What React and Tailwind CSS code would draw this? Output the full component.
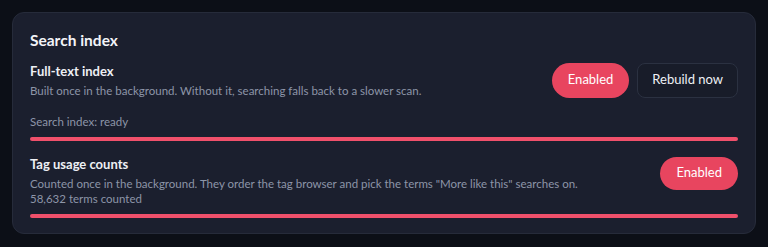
export default function App() {
  return (
    <div className="min-h-[247px] w-full bg-[#0c0f17] p-3" style={{ fontFamily: 'Lato, "Noto Sans", sans-serif' }}>
      <div className="rounded-xl border border-[#262b3a] bg-[#1b1f2e] px-[17px] pt-[17px] pb-[15px]">
        <h2 className="text-[15.5px] font-bold leading-5 text-[#f3f4f8]">Search index</h2>

        <div className="mt-3 flex items-center justify-between gap-4">
          <div>
            <div className="text-[13px] font-bold leading-[18px] text-[#eef0f5]">Full-text index</div>
            <div className="mt-[3px] text-[11.5px] leading-[15px] text-[#8d95a8]">Built once in the background. Without it, searching falls back to a slower scan.</div>
          </div>
          <div className="flex shrink-0 items-center gap-2">
            <button className="h-[35px] rounded-full bg-[#e8455f] px-4 text-[13px] text-white">Enabled</button>
            <button className="h-[35px] rounded-lg border border-[#2b3141] bg-[#181c29] px-[14px] text-[13px] text-[#eef0f5]">Rebuild now</button>
          </div>
        </div>

        <div className="mt-4 text-[11.5px] leading-[15px] text-[#8d95a8]">Search index: ready</div>
        <div className="mt-2 h-1 w-full rounded-full bg-[#f0506b]"></div>

        <div className="mt-[14px] flex items-center justify-between gap-4">
          <div>
            <div className="text-[13px] font-bold leading-[18px] text-[#eef0f5]">Tag usage counts</div>
            <div className="mt-[3px] text-[11.5px] leading-[15px] text-[#8d95a8]">Counted once in the background. They order the tag browser and pick the terms "More like this" searches on.</div>
          </div>
          <button className="h-[33px] shrink-0 rounded-full bg-[#e8455f] px-4 text-[13px] text-white">Enabled</button>
        </div>
        <div className="text-[11.5px] leading-[15px] text-[#8d95a8]">58,632 terms counted</div>
        <div className="mt-2 h-1 w-full rounded-full bg-[#f0506b]"></div>
      </div>
    </div>
  );
}
